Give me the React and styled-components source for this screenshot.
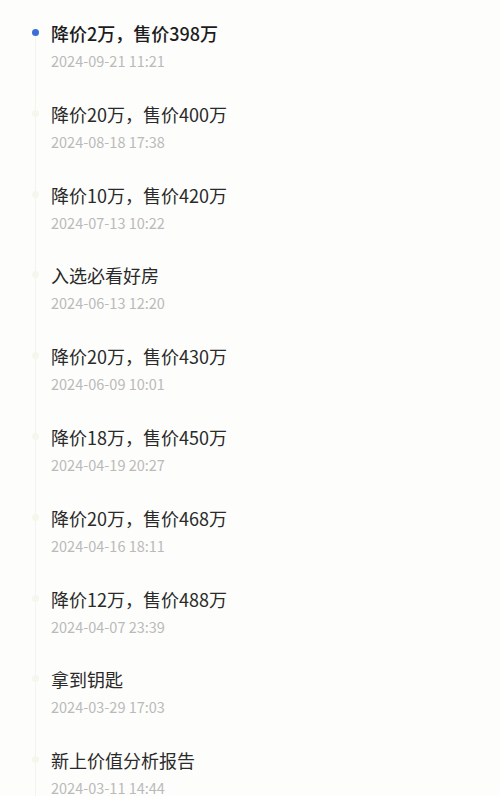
import styled, { createGlobalStyle } from 'styled-components';

const GlobalStyle = createGlobalStyle`
  html, body {
    margin: 0;
    padding: 0;
    background: #fdfdfb;
  }
  body {
    font-family: "Noto Sans CJK SC", "Noto Sans", sans-serif;
  }
`;

const RECORDS = [
  { title: '降价2万，售价398万', time: '2024-09-21 11:21' },
  { title: '降价20万，售价400万', time: '2024-08-18 17:38' },
  { title: '降价10万，售价420万', time: '2024-07-13 10:22' },
  { title: '入选必看好房', time: '2024-06-13 12:20' },
  { title: '降价20万，售价430万', time: '2024-06-09 10:01' },
  { title: '降价18万，售价450万', time: '2024-04-19 20:27' },
  { title: '降价20万，售价468万', time: '2024-04-16 18:11' },
  { title: '降价12万，售价488万', time: '2024-04-07 23:39' },
  { title: '拿到钥匙', time: '2024-03-29 17:03' },
  { title: '新上价值分析报告', time: '2024-03-11 14:44' },
];

const Page = styled.div`
  height: 796px;
  overflow: hidden;
  background: #fdfdfb;
`;

const Timeline = styled.ul`
  list-style: none;
  margin: 0;
  padding: 20px 0 0 0;
`;

const Item = styled.li`
  position: relative;
  padding: 0 0 29.8px 51px;

  &::before {
    content: '';
    position: absolute;
    left: 35px;
    top: 13px;
    bottom: -13px;
    width: 1px;
    background: #f4f4ee;
  }
`;

const Dot = styled.span`
  position: absolute;
  left: 32px;
  top: 9px;
  width: 7px;
  height: 7px;
  border-radius: 50%;
  background: ${(props) => (props.active ? '#3a6fd6' : '#f6f7ec')};
`;

const Title = styled.div`
  font-size: 18px;
  line-height: 26px;
  color: ${(props) => (props.active ? '#1c1c1e' : '#2a2a2a')};
  font-weight: ${(props) => (props.active ? 500 : 400)};
`;

const Time = styled.div`
  margin-top: 5px;
  font-size: 14.5px;
  line-height: 20px;
  color: #bababa;
`;

function App() {
  return (
    <Page>
      <GlobalStyle />
      <Timeline>
        {RECORDS.map((rec, i) => (
          <Item key={rec.time}>
            <Dot active={i === 0} />
            <Title active={i === 0}>{rec.title}</Title>
            <Time>{rec.time}</Time>
          </Item>
        ))}
      </Timeline>
    </Page>
  );
}

export default App;
